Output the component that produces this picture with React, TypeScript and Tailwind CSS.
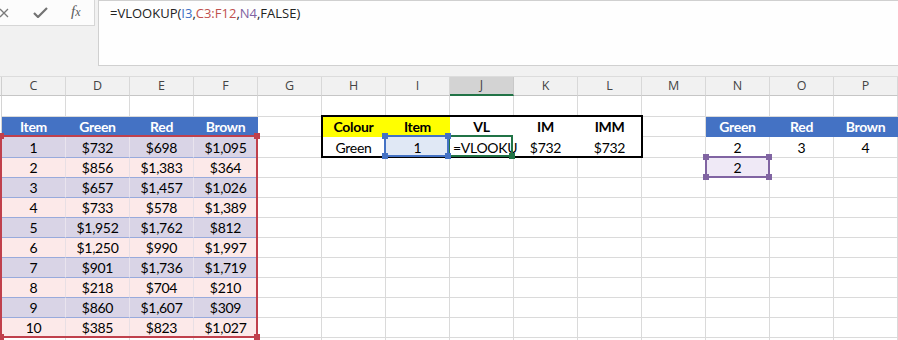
import React from 'react';

type Kind =
  | 'grid'
  | 'blueHead'
  | 'bandA'
  | 'bandB'
  | 'yellow'
  | 'plain'
  | 'plainBold'
  | 'selBlue'
  | 'selPurple'
  | 'edit';

const kindClass: Record<Kind, string> = {
  grid: 'bg-white border-r-[#dadada] border-b-[#dadada] justify-center',
  blueHead: 'bg-[#4472c4] border-r-[#4472c4] border-b-[#4472c4] text-white font-bold justify-center',
  bandA: 'bg-[#d9d4e6] border-r-[#e9e4ee] border-b-[#98aadc] justify-center',
  bandB: 'bg-[#fce9e9] border-r-[#e8dfe4] border-b-[#98aadc] justify-center',
  yellow: 'bg-[#ffff00] border-r-[#ffff00] border-b-[#ffff00] font-bold justify-center',
  plain: 'bg-white border-r-white border-b-white justify-center',
  plainBold: 'bg-white border-r-white border-b-white font-bold justify-center',
  selBlue: 'relative bg-[#e0e8f5] border-r-[#e0e8f5] border-b-[#e0e8f5] justify-center',
  selPurple: 'relative bg-[#efe9f6] border-r-[#efe9f6] border-b-[#efe9f6] justify-center',
  edit: 'relative bg-white border-r-white border-b-white justify-start pl-[3px]',
};

type Cell = { t: string; k: Kind };

const COLS = ['C', 'D', 'E', 'F', 'G', 'H', 'I', 'J', 'K', 'L', 'M', 'N', 'O', 'P'];

const data: string[][] = [
  ['1', '$732', '$698', '$1,095'],
  ['2', '$856', '$1,383', '$364'],
  ['3', '$657', '$1,457', '$1,026'],
  ['4', '$733', '$578', '$1,389'],
  ['5', '$1,952', '$1,762', '$812'],
  ['6', '$1,250', '$990', '$1,997'],
  ['7', '$901', '$1,736', '$1,719'],
  ['8', '$218', '$704', '$210'],
  ['9', '$860', '$1,607', '$309'],
  ['10', '$385', '$823', '$1,027'],
];

const g = (t = ''): Cell => ({ t, k: 'grid' });

function buildRows(): { h: string; cells: Cell[] }[] {
  const rows: { h: string; cells: Cell[] }[] = [];
  rows.push({ h: 'h-[21px]', cells: COLS.map(() => g()) });
  rows.push({
    h: 'h-[20px]',
    cells: [
      { t: 'Item', k: 'blueHead' },
      { t: 'Green', k: 'blueHead' },
      { t: 'Red', k: 'blueHead' },
      { t: 'Brown', k: 'blueHead' },
      g(),
      { t: 'Colour', k: 'yellow' },
      { t: 'Item', k: 'yellow' },
      { t: 'VL', k: 'plainBold' },
      { t: 'IM', k: 'plainBold' },
      { t: 'IMM', k: 'plainBold' },
      g(),
      { t: 'Green', k: 'blueHead' },
      { t: 'Red', k: 'blueHead' },
      { t: 'Brown', k: 'blueHead' },
    ],
  });
  data.forEach((d, i) => {
    const band: Kind = i % 2 === 0 ? 'bandA' : 'bandB';
    const cells: Cell[] = d.map((t) => ({ t, k: band }));
    if (i === 0) {
      cells.push(
        g(),
        { t: 'Green', k: 'plain' },
        { t: '1', k: 'selBlue' },
        { t: '=VLOOKU', k: 'edit' },
        { t: '$732', k: 'plain' },
        { t: '$732', k: 'plain' },
        g(),
        g('2'),
        g('3'),
        g('4'),
      );
    } else if (i === 1) {
      cells.push(g(), g(), g(), g(), g(), g(), g(), { t: '2', k: 'selPurple' }, g(), g());
    } else {
      for (let j = 0; j < 10; j++) cells.push(g());
    }
    rows.push({ h: i === 0 ? 'h-[21px]' : 'h-[20px]', cells });
  });
  rows.push({ h: 'h-[20px]', cells: COLS.map(() => g()) });
  return rows;
}

function Corner({ pos, color }: { pos: string; color: string }) {
  return <div className={`absolute w-[6px] h-[6px] ${pos} ${color}`} />;
}

function SelectionFrame({ kind }: { kind: Kind }) {
  if (kind === 'selBlue') {
    return (
      <div className="absolute -left-[2px] -top-[2px] right-0 bottom-0 border-2 border-[#4472c4] z-30">
        <Corner pos="-left-[4px] -top-[4px]" color="bg-[#4472c4]" />
        <Corner pos="-right-[4px] -top-[4px]" color="bg-[#4472c4]" />
        <Corner pos="-left-[4px] -bottom-[4px]" color="bg-[#4472c4]" />
        <Corner pos="-right-[4px] -bottom-[4px]" color="bg-[#4472c4]" />
      </div>
    );
  }
  if (kind === 'edit') {
    return (
      <div className="absolute -left-[2px] -top-[2px] right-0 bottom-0 border-2 border-[#217346] z-20">
        <Corner pos="-right-[4px] -bottom-[4px]" color="bg-[#217346]" />
      </div>
    );
  }
  if (kind === 'selPurple') {
    return (
      <div className="absolute -left-[1px] -top-[2px] -right-[1px] -bottom-[1px] border-2 border-[#8064a2] z-20">
        <Corner pos="-left-[4px] -top-[4px]" color="bg-[#8064a2]" />
        <Corner pos="-right-[4px] -top-[4px]" color="bg-[#8064a2]" />
        <Corner pos="-left-[4px] -bottom-[4px]" color="bg-[#8064a2]" />
        <Corner pos="-right-[4px] -bottom-[4px]" color="bg-[#8064a2]" />
      </div>
    );
  }
  return null;
}

export default function App() {
  const rows = buildRows();
  return (
    <div className="relative w-[898px] h-[340px] overflow-hidden bg-[#f1f1f1] font-['Lato',sans-serif]">
      {/* Formula bar area */}
      <div className="h-[76px] flex items-start">
        <div className="w-[95px] h-[26px] shrink-0 bg-[#fcfcfc] border-r border-b border-[#d6d6d6] flex items-center">
          <svg width="10" height="10" viewBox="0 0 10 10" className="ml-[-1px]">
            <path d="M1 1 L9 9 M9 1 L1 9" stroke="#7a7a7a" strokeWidth="1.3" fill="none" />
          </svg>
          <svg width="15" height="11" viewBox="0 0 15 11" className="ml-[24px]">
            <path d="M1 6 L5 10 L14 1" stroke="#737373" strokeWidth="2.2" fill="none" />
          </svg>
          <span className="ml-[23px] font-['Liberation_Serif',serif] italic text-[15px] leading-none text-[#5a5a5a] mt-[-2px]">
            f<span className="text-[12px]">x</span>
          </span>
        </div>
        <div className="ml-[3px] flex-1 h-[66px] bg-[#fefefe] border-l border-b border-t border-[#d0d0d0] pl-[11px] pt-[3px] font-['Open_Sans',sans-serif] text-[13px] leading-[18px] text-[#222]">
          =VLOOKUP(<span className="text-[#3d6fc4]">I3</span>,<span className="text-[#c0504d]">C3:F12</span>,
          <span className="text-[#8064a2]">N4</span>,FALSE)
        </div>
      </div>

      {/* Column headers */}
      <div className="flex h-[20px] border-t border-[#dcdcdc] font-['Open_Sans',sans-serif] text-[12.5px] text-[#444]">
        <div className="w-[2px] h-full border-r border-[#cfcfcf] border-b border-b-[#c6c6c6] shrink-0" />
        {COLS.map((c) => (
          <div
            key={c}
            className={
              c === 'J'
                ? 'w-[64px] shrink-0 h-full flex items-center justify-center bg-[#d3d3d3] border-r border-r-[#c8c8c8] border-b-2 border-b-[#217346]'
                : 'w-[64px] shrink-0 h-full flex items-center justify-center bg-[#f1f1f1] border-r border-r-[#d8d8d8] border-b border-b-[#c6c6c6]'
            }
          >
            {c}
          </div>
        ))}
      </div>

      {/* Grid */}
      <div className="flex flex-col bg-white">
        {rows.map((r, ri) => (
          <div key={ri} className={`flex ${r.h} shrink-0`}>
            <div className="w-[2px] h-full shrink-0 bg-white border-r border-[#d4d4d4]" />
            {r.cells.map((cell, ci) => (
              <div
                key={ci}
                className={`w-[64px] shrink-0 h-full flex items-center whitespace-nowrap border-r border-b text-[14px] tracking-[-0.3px] text-black ${kindClass[cell.k]}`}
              >
                <span>{cell.t}</span>
                {cell.k === 'edit' && <span className="w-[1px] h-[14px] bg-black ml-[1px]" />}
                <SelectionFrame kind={cell.k} />
              </div>
            ))}
          </div>
        ))}
      </div>

      {/* Lookup table H2:L3 thick outline */}
      <div className="absolute left-[321px] top-[115px] w-[322px] h-[43px] border-2 border-black z-10 pointer-events-none" />

      {/* Red reference range C3:F12 */}
      <div className="absolute left-[0px] top-[135px] w-[258px] h-[203px] border-2 border-[#c0404c] z-10 pointer-events-none">
        <Corner pos="-left-[4px] -top-[4px]" color="bg-[#c0404c]" />
        <Corner pos="-right-[4px] -top-[4px]" color="bg-[#c0404c]" />
        <Corner pos="-left-[4px] -bottom-[4px]" color="bg-[#c0404c]" />
        <Corner pos="-right-[4px] -bottom-[4px]" color="bg-[#c0404c]" />
      </div>
    </div>
  );
}
